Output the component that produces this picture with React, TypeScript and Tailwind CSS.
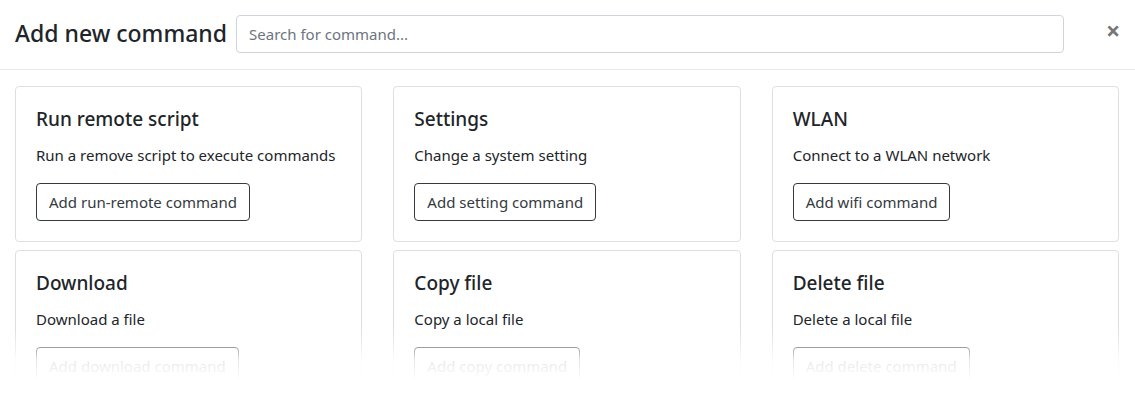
import React from "react";

const cards = [
  { title: "Run remote script", desc: "Run a remove script to execute commands", btn: "Add run-remote command" },
  { title: "Settings", desc: "Change a system setting", btn: "Add setting command" },
  { title: "WLAN", desc: "Connect to a WLAN network", btn: "Add wifi command" },
  { title: "Download", desc: "Download a file", btn: "Add download command" },
  { title: "Copy file", desc: "Copy a local file", btn: "Add copy command" },
  { title: "Delete file", desc: "Delete a local file", btn: "Add delete command" },
];

export default function App() {
  return (
    <div
      className="relative h-[396px] w-[1135px] overflow-hidden bg-white text-[#212529]"
      style={{ fontFamily: '"Segoe UI", "Noto Sans", "Open Sans", sans-serif' }}
    >
      <div className="flex items-center border-b border-[#e9ecef] pl-[15px] pr-[15px] pt-[15px] pb-[16px]">
        <h4 className="m-0 whitespace-nowrap text-[23px] font-medium leading-[1.2]">Add new command</h4>
        <input
          className="ml-[9px] h-[38px] flex-1 rounded-[4px] border border-[#ced4da] px-[12px] text-[15px] text-[#495057] placeholder-[#6c757d] outline-none"
          placeholder="Search for command..."
        />
        <button className="mb-[8px] ml-[42px] w-[14px] text-center text-[25px] font-bold leading-none text-[#777]">×</button>
      </div>
      <div className="grid grid-cols-3 gap-x-[31px] gap-y-2 pl-[15px] pr-[16px] pt-[16px]">
        {cards.map((c) => (
          <div key={c.title} className="rounded-[4px] border border-[#dfdfdf] p-[20px]">
            <h5 className="mb-[12px] text-[19px] font-medium leading-[25px]">{c.title}</h5>
            <p className="mb-[16px] text-[15px] leading-[23px]">{c.desc}</p>
            <button className="rounded-[4px] border border-[#343a40] px-[12px] py-[6px] text-[15px] leading-[24px] text-[#343a40]">
              {c.btn}
            </button>
          </div>
        ))}
      </div>
      <div className="pointer-events-none absolute bottom-0 left-0 right-0 h-[66px] bg-[linear-gradient(to_bottom,rgba(255,255,255,0)_0px,rgba(255,255,255,0.88)_30px,#fff_52px)]" />
    </div>
  );
}
